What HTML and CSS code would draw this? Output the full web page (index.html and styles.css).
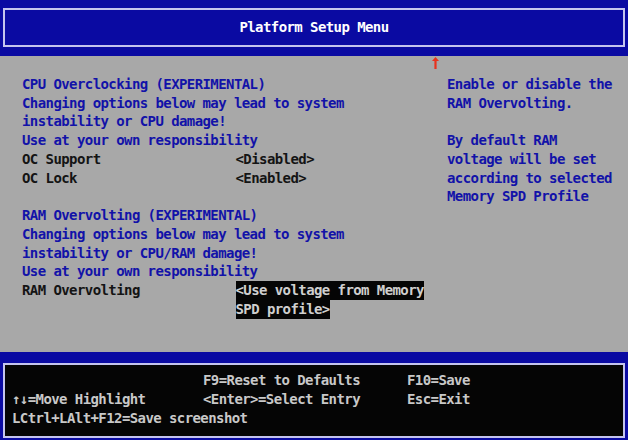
FILE: index.html
```html
<!DOCTYPE html>
<html lang="en">
<head>
<meta charset="utf-8">
<title>Platform Setup Menu</title>
<link rel="stylesheet" href="styles.css">
</head>
<body>
<div class="screen">
  <header class="titlebar">
    <div class="titlebox">Platform Setup Menu</div>
  </header>

  <main class="setup">
    <section class="options">
      <div class="line"></div>
      <div class="line note">CPU Overclocking (EXPERIMENTAL)</div>
      <div class="line note">Changing options below may lead to system</div>
      <div class="line note">instability or CPU damage!</div>
      <div class="line note">Use at your own responsibility</div>
      <div class="item">
        <span class="label">OC Support</span>
        <span class="value">&lt;Disabled&gt;</span>
      </div>
      <div class="item">
        <span class="label">OC Lock</span>
        <span class="value">&lt;Enabled&gt;</span>
      </div>
      <div class="line"></div>
      <div class="line note">RAM Overvolting (EXPERIMENTAL)</div>
      <div class="line note">Changing options below may lead to system</div>
      <div class="line note">instability or CPU/RAM damage!</div>
      <div class="line note">Use at your own responsibility</div>
      <div class="item">
        <span class="label">RAM Overvolting</span>
        <span class="value">
          <span class="selected">&lt;Use voltage from Memory</span>
          <span class="selected">SPD profile&gt;</span>
        </span>
      </div>
    </section>

    <aside class="help">
      <div class="line scroll">
        <svg class="scroll-arrow" width="7" height="12" viewBox="0 0 7 12">
          <path d="M3.5 0 L7 4 L4.6 4 L4.6 12 L2.4 12 L2.4 4 L0 4 Z" fill="#e8321e"/>
        </svg>
      </div>
      <div class="help-text">
        <div class="line">Enable or disable the</div>
        <div class="line">RAM Overvolting.</div>
        <div class="line"></div>
        <div class="line">By default RAM</div>
        <div class="line">voltage will be set</div>
        <div class="line">according to selected</div>
        <div class="line">Memory SPD Profile</div>
      </div>
    </aside>
  </main>

  <footer class="keybar">
    <div class="keybox">
      <span></span><span>F9=Reset to Defaults</span><span>F10=Save</span>
      <span>↑↓=Move Highlight</span><span>&lt;Enter&gt;=Select Entry</span><span>Esc=Exit</span>
      <span class="wide">LCtrl+LAlt+F12=Save screenshot</span>
    </div>
  </footer>
</div>
</body>
</html>
```

FILE: styles.css
```css
html, body {
  margin: 0;
  padding: 0;
}

body {
  width: 628px;
  height: 440px;
  overflow: hidden;
  background: #a8a8a8;
  font-family: "DejaVu Sans Mono", "Liberation Mono", monospace;
  font-size: 14px;
  font-weight: bold;
  letter-spacing: -0.58px;
  line-height: 18.75px;
}

.screen {
  display: flex;
  flex-direction: column;
  height: 440px;
}

/* Title bar */
.titlebar {
  height: 56px;
  flex: none;
  box-sizing: border-box;
  padding: 8px 3px 0 3px;
  background: #0a0aa2;
}

.titlebox {
  height: 35px;
  line-height: 35px;
  border: 2px solid #c4c4ee;
  color: #ffffff;
  text-align: center;
}

/* Main setup page */
.setup {
  height: 296px;
  flex: none;
  display: flex;
  background: #a8a8a8;
}

.options {
  width: 431px;
  box-sizing: border-box;
  padding-left: 22px;
  color: #141414;
}

.line,
.label,
.selected,
.keybox span {
  white-space: pre;
}

.line {
  height: 18.75px;
}

.note {
  color: #1212a8;
}

.item {
  display: grid;
  grid-template-columns: 213.5px auto;
}

.value {
  display: flex;
  flex-direction: column;
  align-items: flex-start;
}

.selected {
  display: block;
  height: 18.75px;
  background: #050505;
  color: #cfcfcf;
}

.help {
  flex: 1;
  color: #1212a8;
}

.scroll {
  display: flex;
  align-items: flex-start;
  padding: 1px 0 0 1px;
  box-sizing: border-box;
}

.help-text {
  padding-left: 16px;
}

/* Key legend */
.keybar {
  flex: 1;
  box-sizing: border-box;
  padding: 11px 3px 2px 3px;
  background: #0a0aa2;
}

.keybox {
  height: 100%;
  box-sizing: border-box;
  border: 2px solid #c4c4ee;
  background: #050505;
  color: #c8c8c8;
  padding: 6px 0 0 7px;
  display: grid;
  grid-template-columns: 191px 204px auto;
  grid-auto-rows: 18.75px;
}

.wide {
  grid-column: 1 / -1;
}
```
